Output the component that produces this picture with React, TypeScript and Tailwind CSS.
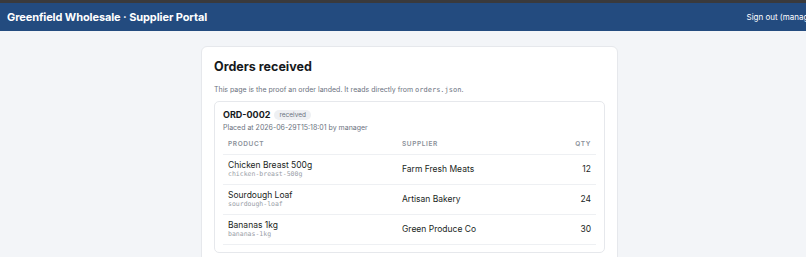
import React from "react";

const rows = [
  { name: "Chicken Breast 500g", slug: "chicken-breast-500g", supplier: "Farm Fresh Meats", qty: 12 },
  { name: "Sourdough Loaf", slug: "sourdough-loaf", supplier: "Artisan Bakery", qty: 24 },
  { name: "Bananas 1kg", slug: "bananas-1kg", supplier: "Green Produce Co", qty: 30 },
];

const mono = { fontFamily: "'DejaVu Sans Mono', monospace" };

export default function App() {
  return (
    <div className="w-[806px] h-[257px] overflow-hidden bg-[#f3f5f8]" style={{ fontFamily: "Inter, 'Liberation Sans', sans-serif" }}>
      <div className="w-[819px]">
        <div className="h-[3px] bg-[#3a3a3c]" />
        <header className="h-[28px] bg-[#234b7f] flex items-center justify-between pl-[7px] pr-0">
          <div className="text-white font-bold text-[11px] tracking-[-0.1px]">Greenfield Wholesale · Supplier Portal</div>
          <div className="text-white text-[8px]">Sign out (manager)</div>
        </header>
        <main className="flex justify-center pt-[15px]">
          <div className="w-[417px] bg-white border border-[#e6e8ec] rounded-[6px] px-[12px] pt-[10px] pb-[12px]">
            <h1 className="text-[12.5px] leading-[20px] font-bold text-[#16191d]">Orders received</h1>
            <p className="mt-[7px] text-[7px] leading-[12px] text-[#6b7280]">
              This page is the proof an order landed. It reads directly from{" "}
              <code className="text-[7px]" style={mono}>orders.json</code>.
            </p>
            <div className="mt-[5px] border border-[#e6e8ec] rounded-[5px] px-[8px] pt-[6px] pb-[7px]">
              <div className="flex items-center gap-[4px]">
                <span className="text-[9px] leading-[14px] font-bold text-[#16191d]">ORD-0002</span>
                <span className="bg-[#eef0f3] text-[#6b7280] text-[6.5px] leading-[10px] px-[5px] rounded-full">received</span>
              </div>
              <div className="text-[7px] leading-[11px] text-[#6b7280]">Placed at 2026-06-29T15:18:01 by manager</div>
              <table className="w-full mt-[4px] border-collapse">
                <thead>
                  <tr className="border-b border-[#eef0f3]">
                    <th className="text-left font-semibold text-[6.5px] tracking-[0.6px] text-[#8a9099] px-[5px] h-[17px] w-[179px]">PRODUCT</th>
                    <th className="text-left font-semibold text-[6.5px] tracking-[0.6px] text-[#8a9099] px-[0px]">SUPPLIER</th>
                    <th className="text-right font-semibold text-[6.5px] tracking-[0.6px] text-[#8a9099] px-[5px]">QTY</th>
                  </tr>
                </thead>
                <tbody>
                  {rows.map((r) => (
                    <tr key={r.slug} className="border-b border-[#eef0f3] h-[30px]">
                      <td className="px-[5px]">
                        <div className="text-[8.5px] leading-[10px] text-[#1b1f24]">{r.name}</div>
                        <div className="text-[6.5px] leading-[8px] text-[#9aa0a8]" style={mono}>{r.slug}</div>
                      </td>
                      <td className="text-[8.5px] text-[#1b1f24]">{r.supplier}</td>
                      <td className="text-right text-[8.5px] text-[#1b1f24] px-[5px]">{r.qty}</td>
                    </tr>
                  ))}
                </tbody>
              </table>
            </div>
          </div>
        </main>
      </div>
    </div>
  );
}
